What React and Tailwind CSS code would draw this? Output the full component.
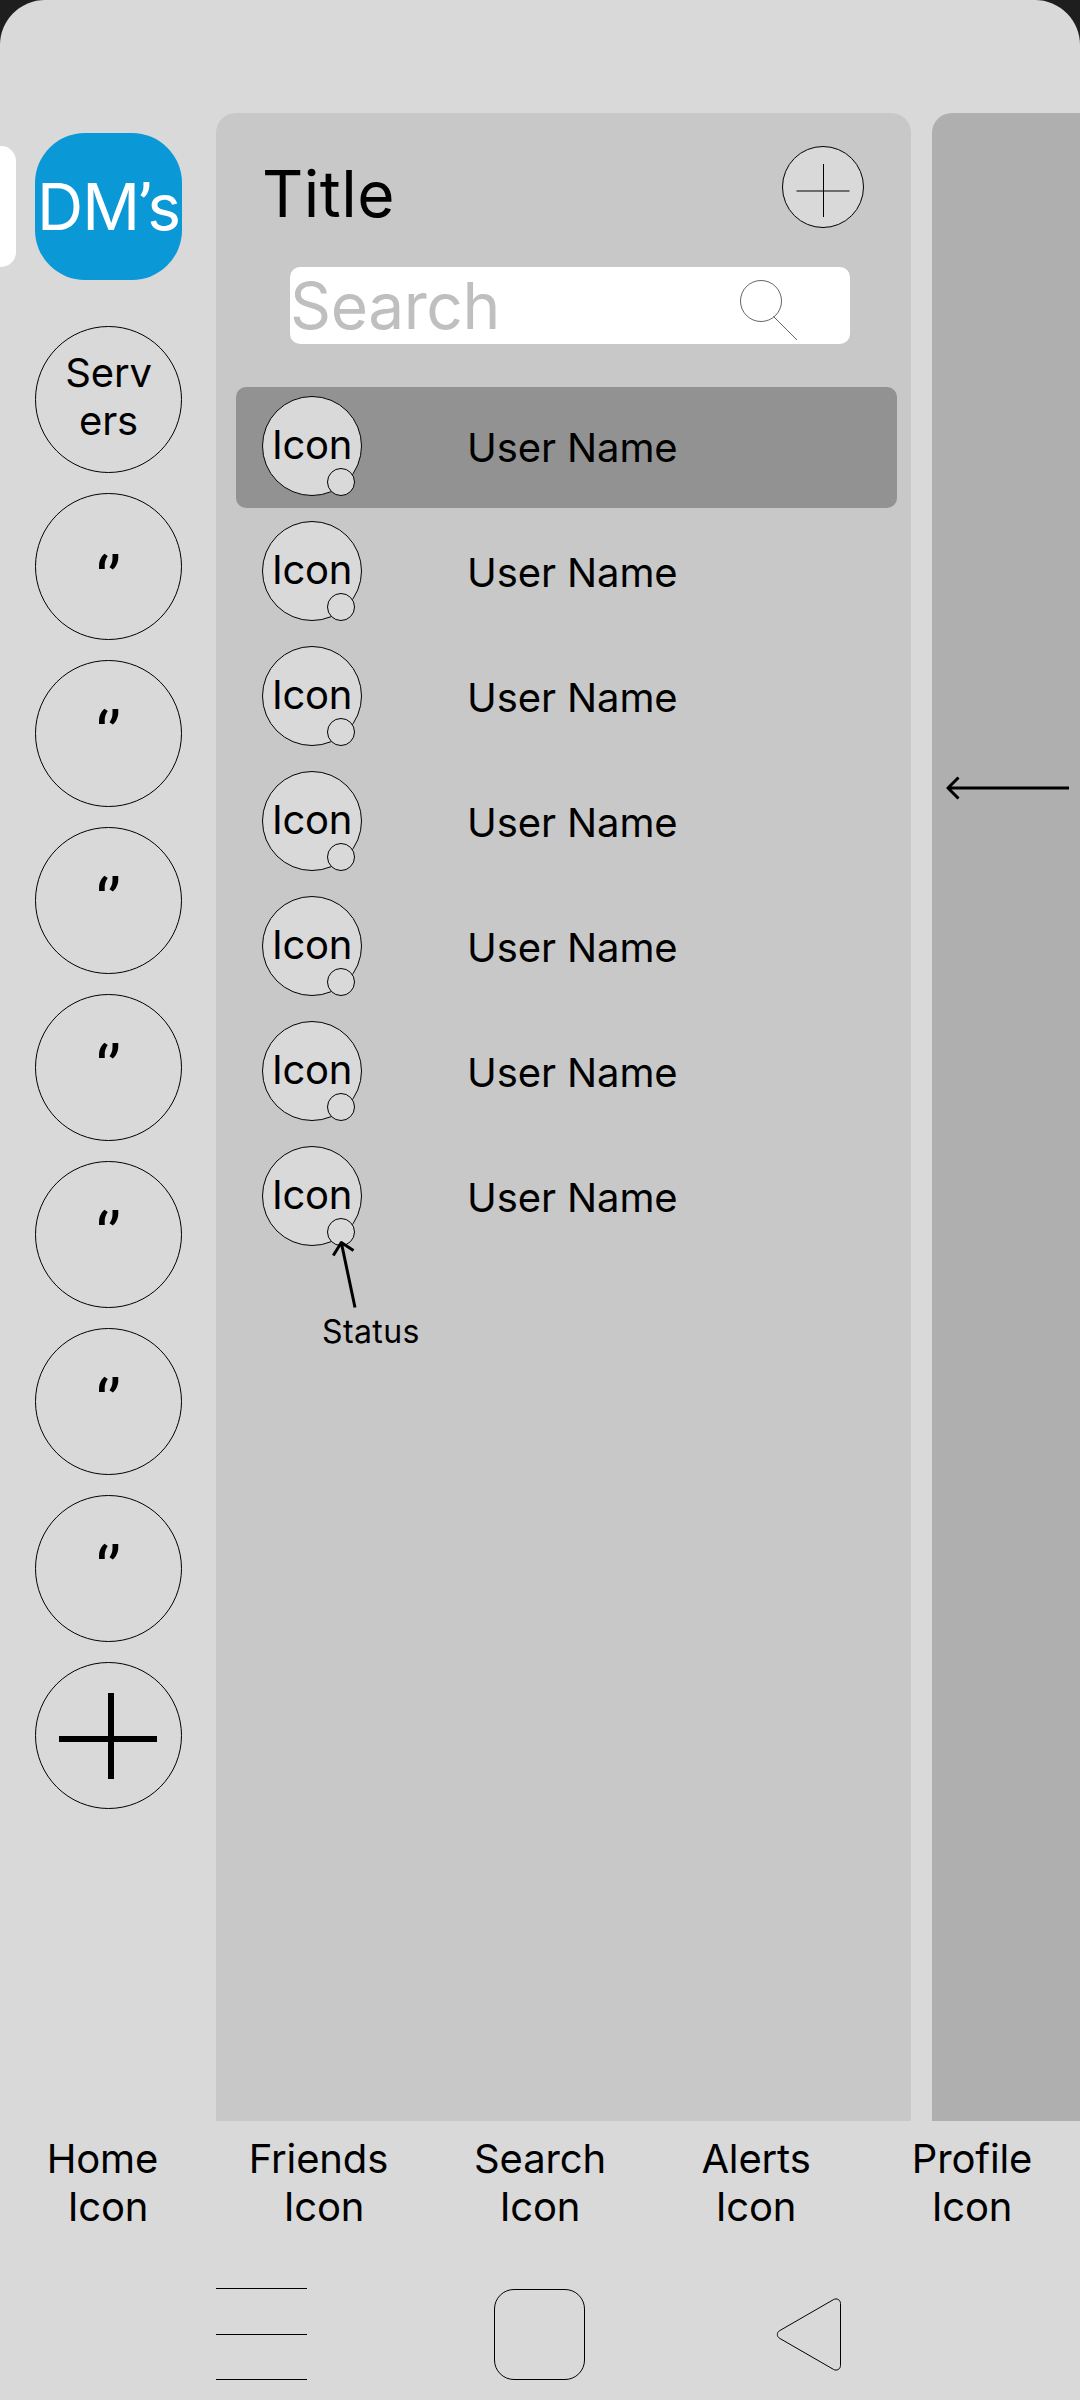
import React from "react";

const members = [0, 1, 2, 3, 4, 5, 6];
const servers = [0, 1, 2, 3, 4, 5, 6];
const tabs = ["Home \nIcon", "Friends \nIcon", "Search\nIcon", "Alerts\nIcon", "Profile\nIcon"];

const circle = "w-[147px] h-[147px] shrink-0 rounded-full border border-black";

function ServerRail() {
  return (
    <aside className="relative flex w-[216px] shrink-0 flex-col pl-[35px] pt-5">
      <div className="absolute left-[-20px] top-[33px] h-[121px] w-[36px] rounded-[15px] bg-white" />
      <div className="flex h-[147px] w-[147px] shrink-0 items-center justify-center rounded-[50px] bg-[#0a98d6] text-[64px] leading-[77px] text-white">
        <span className="tracking-[-1.1px]">
          DM<span className="relative top-px font-['Roboto'] leading-none tracking-[-4.5px]">’</span>s
        </span>
      </div>
      <div className="mt-[46px] flex flex-col gap-5">
        <div className={`${circle} flex flex-col items-center pt-[22px] text-[40px] leading-[48px] tracking-[-0.2px]`}>
          <span>Serv</span>
          <span>ers</span>
        </div>
        {servers.map((i) => (
          <div
            key={i}
            className={`${circle} flex justify-center pl-[2.5px] font-['Roboto'] text-[64px] leading-[77px] tracking-[2.5px] ${i === 0 ? "pt-[49px]" : "pt-[37px]"}`}
          >
            ‘’
          </div>
        ))}
        <div className={circle}>
          <svg width="145" height="145" viewBox="36 1663 145 145" shapeRendering="crispEdges">
            <rect x="108" y="1693" width="6" height="86" />
            <rect x="59" y="1736" width="98" height="6" />
          </svg>
        </div>
      </div>
    </aside>
  );
}

function Member({ active, last }) {
  return (
    <li className={`flex h-[121px] w-[661px] rounded-[10px] pl-[26px] pt-[9px] ${active ? "bg-[#929292]" : ""}`}>
      <div className="relative h-[100px] w-[100px] shrink-0 rounded-full border border-black bg-[#d9d9d9] pt-[24px] text-center text-[40px] leading-[48px] tracking-[-0.3px]">
        Icon
        <span className="absolute left-[64px] top-[71px] h-7 w-7 rounded-full border border-black bg-[#d9d9d9]" />
        {last && (
          <div className="absolute left-[59px] top-[91px] w-[110px]">
            <svg width="40" height="72" viewBox="322 1238 40 72" fill="none" stroke="#000" strokeWidth="3">
              <path d="M355 1307.5L341.3 1242.5M333.3 1255.5L341.3 1242.5L353.5 1250.5" strokeLinejoin="round" />
            </svg>
            <p className="mt-[2px] text-left text-[32px] leading-[39px] tracking-[0.4px]">Status</p>
          </div>
        )}
      </div>
      <span className="ml-[105px] mt-[28px] whitespace-nowrap text-[40px] leading-[48px] tracking-[-0.1px]">
        User Name
      </span>
    </li>
  );
}

function MessagesPanel() {
  return (
    <section className="w-[695px] shrink-0 rounded-t-[20px] bg-[#c8c8c8]">
      <header className="flex justify-between pl-[46px] pr-[47px] pt-[33px]">
        <h1 className="mt-[9px] text-[64px] leading-[77px] tracking-[0.5px]">Title</h1>
        <button className="h-[82px] w-[82px] rounded-full border border-black bg-[#d9d9d9]">
          <svg width="80" height="80" viewBox="783 147 80 80">
            <rect x="796.5" y="190" width="53" height="2" fill="#6c6c6c" />
            <rect x="823" y="164" width="1" height="53" />
          </svg>
        </button>
      </header>
      <div className="ml-[74px] mt-[35px] flex h-[77px] w-[560px] justify-between rounded-[10px] bg-white pr-[50px] text-[64px] leading-[77px] tracking-[-0.4px] text-[#bfbfbf]">
        <span>Search</span>
        <svg width="62" height="77" viewBox="738 267 62 77" fill="none" stroke="#000" strokeOpacity="0.6">
          <circle cx="761" cy="301" r="20.5" />
          <path d="M773.5 316.5L797 340" />
        </svg>
      </div>
      <ul className="ml-5 mt-[43px] flex flex-col gap-1">
        {members.map((i) => (
          <Member key={i} active={i === 0} last={i === 6} />
        ))}
      </ul>
    </section>
  );
}

export default function App() {
  return (
    <div className="h-[2400px] w-[1080px] overflow-hidden bg-[#1e1e1e] font-['Inter',sans-serif] text-black">
      <div className="flex h-full flex-col overflow-hidden rounded-t-[45px] bg-[#d9d9d9] pt-[113px]">
        <main className="flex h-[2008px] shrink-0">
          <ServerRail />
          <MessagesPanel />
          <section className="ml-[21px] flex-1 rounded-tl-[20px] bg-[#afafaf] pl-3 pt-[660px]">
            <svg width="130" height="30" viewBox="944 773 130 30" fill="none" stroke="#000" strokeWidth="3">
              <path d="M1069 788H948M958.5 777.5L948 788L958.5 798.5" strokeLinejoin="round" />
            </svg>
          </section>
        </main>
        <nav className="grid grid-cols-5 pt-[14px] text-center text-[40px] leading-[48px] tracking-[-0.15px]">
          {tabs.map((t) => (
            <div key={t} className="whitespace-pre">{t}</div>
          ))}
        </nav>
        <footer className="mt-[57px] flex pl-[216px]">
          <div className="flex h-[92px] w-[91px] flex-col">
            <div className="h-px bg-black" />
            <div className="mt-[45px] h-px bg-black" />
            <div className="mt-[44px] h-px bg-black" />
          </div>
          <div className="ml-[187px] mt-px h-[91px] w-[91px] rounded-[20px] border border-black" />
          <svg className="ml-[190px] mt-[9px]" width="70" height="76" viewBox="775 2297 70 76" fill="none" stroke="#000">
            <path d="M779.6 2338.3C776.6 2336.6 776.6 2332.4 779.6 2330.7L833.5 2299.6C836.8 2297.7 840.5 2300 840.5 2303.5V2365.5C840.5 2369 836.8 2371.3 833.5 2369.4Z" />
          </svg>
        </footer>
      </div>
    </div>
  );
}
